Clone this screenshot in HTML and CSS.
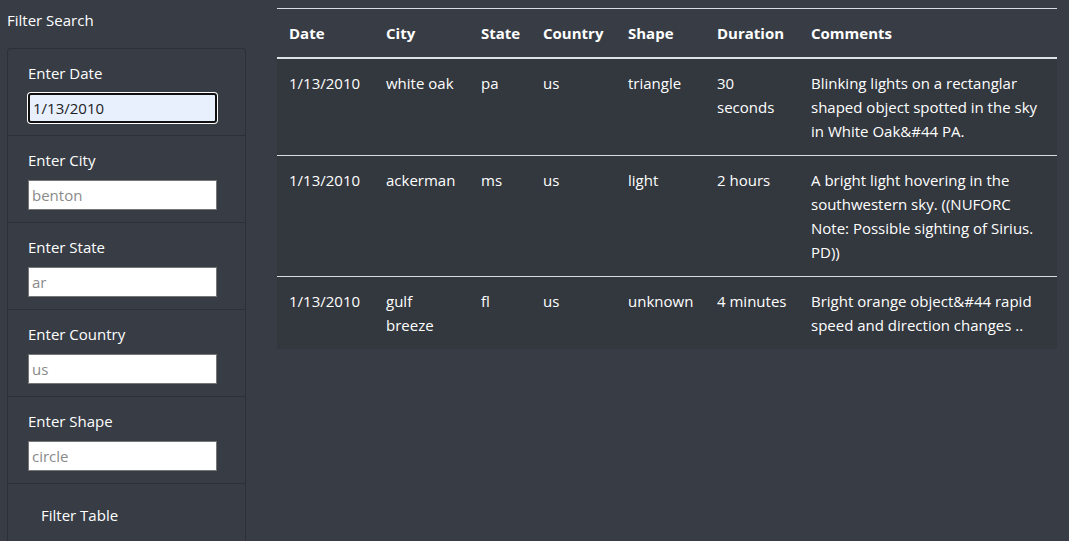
FILE: index.html
```html
<!DOCTYPE html>
<html lang="en">
<head>
<meta charset="utf-8">
<title>UFO Sightings</title>
<link rel="stylesheet" href="styles.css">
</head>
<body>
<div class="layout">
  <aside class="sidebar">
    <h5 class="filter-title">Filter Search</h5>
    <ul class="filters">
      <li class="filter-item">
        <label class="filter-label" for="datetime">Enter Date</label>
        <input class="filter-input focused" id="datetime" type="text" value="1/13/2010">
      </li>
      <li class="filter-item">
        <label class="filter-label" for="city">Enter City</label>
        <input class="filter-input" id="city" type="text" placeholder="benton">
      </li>
      <li class="filter-item">
        <label class="filter-label" for="state">Enter State</label>
        <input class="filter-input" id="state" type="text" placeholder="ar">
      </li>
      <li class="filter-item">
        <label class="filter-label" for="country">Enter Country</label>
        <input class="filter-input" id="country" type="text" placeholder="us">
      </li>
      <li class="filter-item">
        <label class="filter-label" for="shape">Enter Shape</label>
        <input class="filter-input" id="shape" type="text" placeholder="circle">
      </li>
      <li class="filter-item last">
        <button class="filter-btn" type="button">Filter Table</button>
      </li>
    </ul>
  </aside>
  <main class="content">
    <table class="ufo-table">
      <thead>
        <tr>
          <th class="c-date">Date</th>
          <th class="c-city">City</th>
          <th class="c-state">State</th>
          <th class="c-country">Country</th>
          <th class="c-shape">Shape</th>
          <th class="c-duration">Duration</th>
          <th class="c-comments">Comments</th>
        </tr>
      </thead>
      <tbody>
        <tr>
          <td>1/13/2010</td>
          <td>white oak</td>
          <td>pa</td>
          <td>us</td>
          <td>triangle</td>
          <td>30 seconds</td>
          <td>Blinking lights on a rectanglar shaped object spotted in the sky in White Oak&amp;#44 PA.</td>
        </tr>
        <tr>
          <td>1/13/2010</td>
          <td>ackerman</td>
          <td>ms</td>
          <td>us</td>
          <td>light</td>
          <td>2 hours</td>
          <td>A bright light hovering in the southwestern sky. ((NUFORC Note: Possible sighting of Sirius. PD))</td>
        </tr>
        <tr>
          <td>1/13/2010</td>
          <td>gulf breeze</td>
          <td>fl</td>
          <td>us</td>
          <td>unknown</td>
          <td>4 minutes</td>
          <td>Bright orange object&amp;#44 rapid speed and direction changes ..</td>
        </tr>
      </tbody>
    </table>
  </main>
</div>
</body>
</html>
```

FILE: styles.css
```css
* { box-sizing: border-box; }

html, body {
  margin: 0;
  padding: 0;
  height: 100%;
}

body {
  background: #383d45;
  color: #ffffff;
  font-family: "Open Sans", "Noto Sans", sans-serif;
  font-size: 15px;
  line-height: 24px;
  overflow: hidden;
}

.layout {
  display: flex;
  align-items: flex-start;
  gap: 31px;
  padding: 8px 12px 0 7px;
}

.sidebar {
  width: 239px;
  flex: none;
}

.filter-title {
  margin: 0 0 16px;
  font-size: 15px;
  font-weight: 400;
  line-height: 24px;
}

.filters {
  list-style: none;
  margin: 0;
  padding: 0;
  border: 1px solid #2d3137;
  border-bottom: none;
  border-radius: 4px 4px 0 0;
}

.filter-item {
  display: flex;
  flex-direction: column;
  align-items: flex-start;
  padding: 12px 20px;
  border-bottom: 1px solid #2d3137;
}

.filter-item.last {
  border-bottom: none;
  height: 57px;
}

.filter-label {
  display: block;
  line-height: 24px;
  margin-bottom: 8px;
}

.filter-input {
  width: 189px;
  height: 30px;
  padding: 1px 3px;
  border: 1px solid #767676;
  border-radius: 0;
  background: #ffffff;
  color: #222;
  font-family: "Open Sans", "Noto Sans", sans-serif;
  font-size: 15px;
  outline: none;
}

.filter-input::placeholder {
  color: #8a8a8a;
}

.filter-input.focused {
  border: 2px solid #101010;
  border-radius: 3px;
  box-shadow: 0 0 0 1px #ffffff;
  background: #e8f0fe;
  padding: 0 2px 0 3px;
}

.filter-btn {
  background: transparent;
  border: 1px solid transparent;
  color: #ffffff;
  font-family: "Open Sans", "Noto Sans", sans-serif;
  font-size: 15px;
  line-height: 24px;
  padding: 6px 12px 5px;
  cursor: pointer;
}

.content {
  flex: 1;
  min-width: 0;
}

.ufo-table {
  width: 780px;
  table-layout: fixed;
  border-collapse: collapse;
}

.ufo-table th,
.ufo-table td {
  padding: 12px;
  text-align: left;
  vertical-align: top;
  border-top: 1px solid #d8dce0;
  line-height: 24px;
}

.ufo-table th {
  font-weight: 700;
  border-bottom: 2px solid #dee2e6;
}

.ufo-table tbody tr {
  background: #33373e;
}

.ufo-table tbody tr:first-child td {
  border-top: 2px solid #dee2e6;
}

.c-date { width: 97px; }
.c-city { width: 95px; }
.c-state { width: 62px; }
.c-country { width: 85px; }
.c-shape { width: 89px; }
.c-duration { width: 94px; }
.c-comments { width: 258px; }
```
